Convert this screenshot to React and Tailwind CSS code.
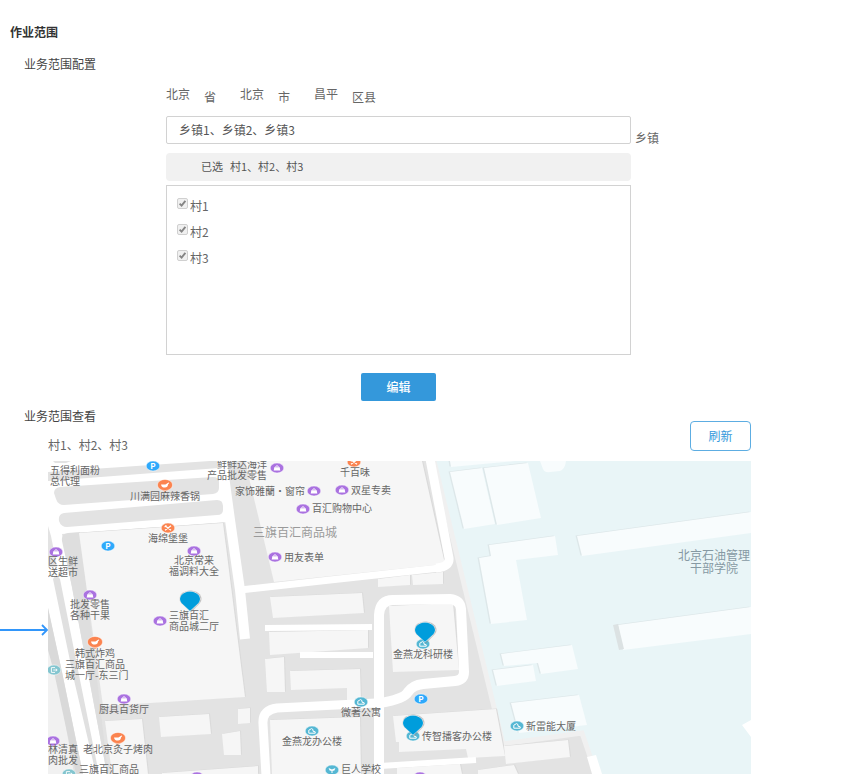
import React from "react";

const villages = ["村1", "村2", "村3"];

const regions = [
  { value: "北京", unit: "省" },
  { value: "北京", unit: "市" },
  { value: "昌平", unit: "区县" },
];

// Buildings standing on the commercial blocks
const greyBuildings = [
  "79,533 223,523 245,697 103,706",
  "245,461 422,461 445,564 274,582",
  "270,597 362,593 364,613 273,618",
  "269,632 368,630 368,648 270,655",
  "265,659 284,657 285,692 267,692",
  "290,671 360,669 361,702 347,703 347,688 291,690",
  "378,579 410,575 410,585 378,587",
  "412,575 443,572 443,584 413,585",
  "389,606 453,603 459,670 393,672",
  "270,720 360,717 361,774 272,774",
  "393,716 496,709 505,756 468,758 466,749 399,752 399,742 396,742",
  "105,721 142,719 148,774 112,774",
  "159,717 209,714 211,734 161,737",
  "222,734 240,731 241,755 224,755",
  "238,709 250,708 250,723 238,724",
  "162,773 258,766 258,774 162,774",
  "504,746 568,740 570,757 506,764",
  "478,770 514,765 518,774 478,774",
  "397,768 460,764 462,774 397,774",
];

// Buildings inside the campus
const campusBuildings = [
  "450,461 515,461 451,467",
  "450,472 482,468 495,524 464,529",
  "484,468 528,463 541,518 497,525",
  "577,536 751,512 751,533 582,556",
  "489,545 555,536 558,555 516,560 527,620 491,624 479,558 491,556",
  "618,625 751,607 751,634 623,650",
  "501,654 572,645 578,669 541,674 538,663 504,666",
  "493,670 533,665 536,681 497,686",
  "511,703 579,695 587,725 519,733",
];

const places = [
  { x: 50, y: 471, lines: ["五得利面粉", "总代理"] },
  { x: 165, y: 496, anchor: "middle", lines: ["川满园麻辣香锅"], icon: "food", ix: 165, iy: 485 },
  { x: 168, y: 538, anchor: "middle", lines: ["海绵堡堡"], icon: "dine", ix: 168, iy: 528 },
  { x: 194, y: 561, anchor: "middle", lines: ["北京常来", "福调料大全"], icon: "shop", ix: 194, iy: 551 },
  { x: 48, y: 562, lines: ["区生鲜", "送超市"], icon: "shop", ix: 56, iy: 552 },
  { x: 90, y: 605, anchor: "middle", lines: ["批发零售", "各种干果"], icon: "shop", ix: 90, iy: 595 },
  { x: 169, y: 616, lines: ["三旗百汇", "商品城二厅"], icon: "shop", ix: 160, iy: 621 },
  { x: 95, y: 653, anchor: "middle", lines: ["韩式炸鸡"], icon: "food", ix: 95, iy: 642 },
  { x: 65, y: 665, lines: ["三旗百汇商品", "城一厅-东三门"], icon: "gate", ix: 54, iy: 670 },
  { x: 124, y: 709, anchor: "middle", lines: ["厨具百货厅"], icon: "shop", ix: 124, iy: 699 },
  { x: 118, y: 749, anchor: "middle", lines: ["老北京灸子烤肉"], icon: "food", ix: 118, iy: 738 },
  { x: 48, y: 750, lines: ["林清真", "肉批发"], icon: "shop", ix: 53, iy: 741 },
  { x: 79, y: 769, lines: ["三旗百汇商品"], icon: "gate", ix: 69, iy: 774 },
  { x: 267, y: 465, anchor: "end", lines: ["鲜鲜达海洋", "产品批发零售"], icon: "shop", ix: 277, iy: 468 },
  { x: 355, y: 472, anchor: "middle", lines: ["千百味"], icon: "dine", ix: 354, iy: 462 },
  { x: 305, y: 491, anchor: "end", lines: ["家饰雅蘭·窗帘"], icon: "shop", ix: 314, iy: 491 },
  { x: 351, y: 490, lines: ["双星专卖"], icon: "shop", ix: 342, iy: 490 },
  { x: 312, y: 508, lines: ["百汇购物中心"], icon: "shop", ix: 303, iy: 509 },
  { x: 284, y: 557, lines: ["用友表单"], icon: "shop", ix: 275, iy: 557 },
  { x: 423, y: 654, anchor: "middle", lines: ["金燕龙科研楼"], icon: "tower", ix: 423, iy: 644 },
  { x: 361, y: 712, anchor: "middle", lines: ["微著公寓"], icon: "tower", ix: 361, iy: 702 },
  { x: 312, y: 741, anchor: "middle", lines: ["金燕龙办公楼"], icon: "tower", ix: 312, iy: 731 },
  { x: 341, y: 769, lines: ["巨人学校"], icon: "school", ix: 332, iy: 770 },
  { x: 422, y: 736, lines: ["传智播客办公楼"], icon: "tower", ix: 413, iy: 736 },
  { x: 526, y: 726, lines: ["新雷能大厦"], icon: "tower", ix: 517, iy: 726 },
];

const extraIcons = [
  { kind: "parking", x: 153, y: 466 },
  { kind: "parking", x: 108, y: 546 },
  { kind: "parking", x: 421, y: 699 },
  { kind: "shop", x: 197, y: 777 },
  { kind: "shop", x: 420, y: 777 },
];

const pins = [
  { x: 190, y: 611 },
  { x: 425, y: 642 },
  { x: 413, y: 735 },
];

const iconColors = {
  shop: "#aa72e0",
  food: "#fb8450",
  dine: "#fb8450",
  gate: "#83c5cf",
  tower: "#55b7d3",
  school: "#55b7d3",
  parking: "#2ea9fb",
};

function PlaceIcon({ kind, x, y }) {
  return (
    <g transform={`translate(${x} ${y})`}>
      {kind === "food" && <path d="M-4 4L0 7L4 4Z" fill="#fb8450" />}
      <ellipse
        rx={kind === "food" ? 7.6 : 6.8}
        ry={kind === "food" ? 5.6 : 5}
        fill={iconColors[kind]}
        stroke="#fff"
        strokeWidth="0.5"
      />
      {kind === "shop" && (
        <>
          <path d="M-3.3 2.4L-2.7 -0.7H2.7L3.3 2.4Z" fill="#fff" />
          <path d="M-1.8 -0.6Q0 -4 1.8 -0.6" fill="none" stroke="#fff" strokeWidth="0.9" />
        </>
      )}
      {kind === "food" && (
        <path d="M-4 -0.6H0.4L3.6 -2.6L4.2 -2L3 -0.4Q2.8 2.6 0 2.6Q-3.4 2.6 -4 -0.6Z" fill="#fff" />
      )}
      {kind === "dine" && (
        <path d="M-3 -2.2L3 2.2M3 -2.2L-3 2.2M-3.4 -0.8L-1.6 -2.6" stroke="#fff" strokeWidth="1.2" />
      )}
      {kind === "gate" && (
        <path d="M1 -2.4H-2.6V2.4H1M-0.8 0H3M1.8 -1.3L3.2 0L1.8 1.3" fill="none" stroke="#fff" strokeWidth="0.9" />
      )}
      {kind === "tower" && (
        <path d="M-3.2 2.2V-0.8L-0.4 -2.4L1 -1.4V0.2L3.2 0.8V2.2Z" fill="none" stroke="#fff" strokeWidth="1" />
      )}
      {kind === "school" && (
        <path d="M-3.4 -2L0 -0.6L3.4 -2L2.4 0.4L0 1L-2.4 0.4ZM-0.5 0.5H0.5V3H-0.5Z" fill="#fff" />
      )}
      {kind === "parking" && (
        <text y="3" textAnchor="middle" fontSize="8" fontWeight="700" fill="#fff">
          P
        </text>
      )}
    </g>
  );
}

function VillageMap() {
  return (
    <svg
      viewBox="48 461 703 313"
      role="img"
      aria-label="业务范围地图"
      className="block h-auto w-full max-w-[703px] min-w-0 flex-1"
    >
      <rect x="48" y="461" width="703" height="313" fill="#e3e3e3" />

      {/* campus ground and its kerb */}
      <polygon points="435,461 751,461 751,774 596,774 582,731 505,744" fill="#e9f5f7" />
      <path d="M434 461L503 744L582 733L596 774" fill="none" stroke="#f0f0f0" strokeWidth="5" />
      {campusBuildings.map((points) => (
        <g key={points}>
          <polygon points={points} fill="#dde7e9" transform="translate(-1.5 -0.5)" />
          <polygon points={points} fill="#f8fcfd" />
        </g>
      ))}
      <path d="M540 461L543 469Q545 473 550 472L560 471Q565 469 566 461Z" fill="#f8fcfd" />
      <polygon points="613,625 618,624 624,649 619,650" fill="#dce2e3" />
      <polygon points="587,757 596,755 602,774 592,774" fill="#fff" />
      <polygon points="742,725 751,720 751,737" fill="#fff" />

      {/* north-west roads */}
      <path d="M48 461H210L48 472Z" fill="#fff" />
      <path d="M53 461H71L66 463H55Z" fill="#e3e3e3" />
      <polygon points="48,481 219,468 228,522 62,534 107,774 83,774 62,672 48,608" fill="#fff" />
      <path d="M60 487L213 477Q219 477 219 482V488Q219 493 213 494L64 505Q58 505 56 499L54 493Q54 488 60 487Z" fill="#e3e3e3" />
      <path d="M64 513L217 500Q223 500 223 506V510Q223 515 217 515L67 527Q61 527 59 521Q58 514 64 513Z" fill="#e3e3e3" />
      <path d="M68 533L80 532L108 774H107L72 587L62 541Q61 534 68 533Z" fill="#dedede" />
      <polygon points="48,526 51,536 57,567 48,567" fill="#e3e3e3" />
      <path d="M53 579Q56 573 60 579L80 680L99 774H96L74 680Z" fill="#e0e0e0" />
      <polygon points="48,640 56,668 74,774 48,774" fill="#f1f1f1" />
      <polygon points="48,608 62,672 83,774 76,774 54,672 48,650" fill="#d9d9d9" />

      {greyBuildings.map((points) => (
        <g key={points}>
          <polygon points={points} fill="#dadada" transform="translate(1 -0.5)" />
          <polygon points={points} fill="#f6f6f6" />
        </g>
      ))}

      {/* streets between the blocks */}
      <g fill="none" stroke="#fff" strokeLinejoin="round">
        <path d="M222 461L230 520L240 590L245 639" strokeWidth="10" />
        <path d="M240 590L330 580L440 568" strokeWidth="7" />
        <path d="M430 459L449 558Q450 567 436 568" strokeWidth="9" />
        <path d="M379 776V615Q380 600 393 600L450 599Q460 600 461 609L464 672Q464 680 455 681L423 684Q413 685 408 692Q404 699 380 703" strokeWidth="10" />
        <path d="M265 628L372 627M300 655H373" strokeWidth="6" />
        <path d="M376 703L277 708Q262 710 263 724L266 776" strokeWidth="9" />
        <path d="M380 766L476 760" strokeWidth="6" />
      </g>

      {places.map((place) => (
        <g key={`${place.ix}-${place.y}-${place.lines[0]}`}>
          {place.icon && <PlaceIcon kind={place.icon} x={place.ix} y={place.iy} />}
          <text textAnchor={place.anchor || "start"} fontSize="10" fill="#666">
            {place.lines.map((line, row) => (
              <tspan
                key={line}
                x={place.x}
                y={place.y + (place.lines.length > 1 ? 3 : 4) + row * 11}
              >
                {line}
              </tspan>
            ))}
          </text>
        </g>
      ))}

      <text x="295" y="537" textAnchor="middle" fontSize="12" fill="#9a9a9a">
        三旗百汇商品城
      </text>
      <text textAnchor="middle" fontSize="12" fill="#8699a3">
        <tspan x="714" y="560">北京石油管理</tspan>
        <tspan x="714" y="573">干部学院</tspan>
      </text>

      {extraIcons.map((icon) => (
        <PlaceIcon key={`${icon.x}-${icon.y}`} kind={icon.kind} x={icon.x} y={icon.y} />
      ))}

      {pins.map((pin) => (
        <g key={pin.x} transform={`translate(${pin.x} ${pin.y})`}>
          <path
            d="M1 1.5L-9 -8Q-12 -12 -9 -17Q-5 -20.5 1 -20.5Q7 -20 10 -16.5Q13 -12 10 -8Z"
            fill="#888"
            opacity="0.45"
          />
          <path
            d="M0 0L-8.5 -8Q-11.5 -12 -8.5 -16Q-5 -19.5 0 -19.5Q5 -19.5 8.5 -16Q11.5 -12 8.5 -8Z"
            fill="#009ddc"
            stroke="#fff"
            strokeWidth="1"
            paintOrder="stroke"
          />
        </g>
      ))}
    </svg>
  );
}

function VillageCheckbox({ name }) {
  return (
    <label className="flex items-start gap-0.5 text-[#666]">
      <span className="grid">
        <input
          type="checkbox"
          defaultChecked
          disabled
          className="col-start-1 row-start-1 size-[11px] appearance-none rounded-xs border border-[#d0d0d0] bg-[#f0f0f0]"
        />
        <svg viewBox="0 0 11 11" className="col-start-1 row-start-1 size-[11px]" aria-hidden="true">
          <path d="M2.6 5.6L4.6 7.6L8.4 2.8" fill="none" stroke="#858585" strokeWidth="1.9" />
        </svg>
      </span>
      <span>{name}</span>
    </label>
  );
}

export default function App() {
  return (
    <main className="bg-white pt-6 font-['Noto_Sans_CJK_SC','Liberation_Sans',sans-serif] text-xs leading-4 text-[#555]">
      <h1 className="pl-2.5 font-bold text-[#333]">作业范围</h1>

      <section className="mt-4">
        <h2 className="pl-6 text-[#444]">业务范围配置</h2>

        <div className="mt-3.5 grid grid-cols-[minmax(0,465px)_auto] justify-start gap-x-1 pr-4 pl-[166px]">
          <div className="flex gap-6 text-[#666]">
            {regions.map((region) => (
              <div key={region.unit} className="flex gap-3.5">
                <span>{region.value}</span>
                <span className="pt-[3px]">{region.unit}</span>
              </div>
            ))}
          </div>

          <input
            id="towns"
            type="text"
            readOnly
            value="乡镇1、乡镇2、乡镇3"
            className="col-start-1 mt-[11px] h-7 w-full rounded-xs border border-[#d2d2d2] px-3 pb-0.5 outline-none"
          />
          <label htmlFor="towns" className="self-end leading-3 text-[#666]">
            乡镇
          </label>

          <p className="col-start-1 mt-[9px] rounded-sm bg-[#f1f1f1] pt-[5px] pb-[7px] pl-[35px] text-[11px]">
            <span className="mr-[7px]">已选</span>
            {villages.join("、")}
          </p>

          <div className="col-start-1 mt-1 flex min-h-[170px] flex-col gap-2.5 border border-[#d2d2d2] px-2.5 py-3">
            {villages.map((name) => (
              <VillageCheckbox key={name} name={name} />
            ))}
          </div>

          <button
            type="button"
            className="col-start-1 mt-[18px] h-7 w-[75px] justify-self-center rounded-xs bg-[#3498db] font-medium text-white"
          >
            编辑
          </button>
        </div>
      </section>

      <section className="mt-[7px]">
        <div className="flex max-w-[751px] justify-between pl-6">
          <div>
            <h2 className="text-[#444]">业务范围查看</h2>
            <p className="mt-[13px] pl-6 text-[#666]">{villages.join("、")}</p>
          </div>
          <button
            type="button"
            className="mb-0.5 h-[30px] w-[61px] self-end rounded-sm border border-[#5dade2] text-[#3498db]"
          >
            刷新
          </button>
        </div>

        <div className="mt-2 flex">
          <svg viewBox="0 0 48 18" className="mt-40 h-[18px] w-12 shrink-0" aria-hidden="true">
            <path d="M0 9H47M42 4L47 9L42 14" fill="none" stroke="#3296fa" strokeWidth="1.8" />
          </svg>
          <VillageMap />
        </div>
      </section>
    </main>
  );
}
